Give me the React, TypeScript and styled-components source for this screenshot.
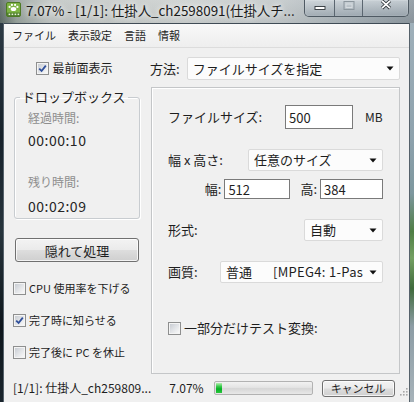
import React from "react";
import styled, { createGlobalStyle } from "styled-components";

const UI_FONT = `"Noto Sans CJK JP", "Noto Sans", "DejaVu Sans", sans-serif`;

const GlobalStyle = createGlobalStyle`
  * { box-sizing: border-box; }
  html, body { margin: 0; padding: 0; }
  body {
    width: 414px;
    height: 402px;
    overflow: hidden;
    background: #1b252d;
    font-family: ${UI_FONT};
  }
`;

const Window = styled.div`
  width: 414px;
  height: 402px;
  display: flex;
  flex-direction: column;
  overflow: hidden;
  font-family: ${UI_FONT};
  color: #1e1e1e;
`;

/* ---- aero title bar ---- */

const TitleBar = styled.div`
  flex: none;
  height: 23px;
  display: flex;
  align-items: flex-start;
  background:
    linear-gradient(180deg, rgba(255, 255, 255, 0.1), rgba(0, 0, 0, 0.04)),
    linear-gradient(90deg, #5f6d68 0%, #98a39d 4%, #c1c6c4 12%, #cdd1d0 45%, #c2c8ca 68%, #a6b0b6 86%, #8e99a1 100%);
`;

const AppIcon = styled.svg`
  flex: none;
  width: 15px;
  height: 15px;
  margin: 2px 0 0 6px;
`;

const TitleText = styled.div`
  flex: none;
  margin: 1px 0 0 5px;
  font-size: 13.4px;
  line-height: 19px;
  white-space: nowrap;
  color: #1a1a1a;
  text-shadow: 0 0 5px rgba(255, 255, 255, 0.95), 0 0 9px rgba(255, 255, 255, 0.7);
`;

const CaptionGroup = styled.div`
  flex: none;
  display: flex;
  margin-left: auto;
  margin-right: 5px;
  height: 17px;
  border: 1px solid #4f5a63;
  border-top: none;
  border-radius: 0 0 5px 5px;
  overflow: hidden;
  box-shadow: inset 0 0 0 1px rgba(255, 255, 255, 0.3);
`;

const CaptionButton = styled.div<{ $w: number }>`
  width: ${(p) => p.$w}px;
  display: flex;
  align-items: flex-start;
  justify-content: center;
  background: linear-gradient(180deg, rgba(214, 221, 226, 0.7) 0%, rgba(184, 193, 200, 0.7) 50%, rgba(156, 167, 176, 0.75) 100%);

  & + & {
    border-left: 1px solid #5b6670;
  }
`;

const Glyph = styled.svg<{ $top: number }>`
  width: 12px;
  height: 10px;
  margin-top: ${(p) => p.$top}px;
`;

/* ---- frame ---- */

const FrameBody = styled.div`
  flex: 1;
  min-height: 0;
  display: flex;
`;

const SideFrame = styled.div<{ $side: "left" | "right" }>`
  flex: none;
  width: ${(p) => (p.$side === "left" ? 4 : 5)}px;
  background: ${(p) =>
    p.$side === "left"
      ? "linear-gradient(180deg, #2c3a44 0%, #17222b 30%, #27343c 55%, #0e161c 80%, #1a252d 100%)"
      : "linear-gradient(180deg, #9fb0ba 0%, #8ea2ad 30%, #7d979e 45%, #4f7e45 55%, #74a062 62%, #3f6a3c 70%, #8d9da5 80%, #a7b3ba 100%)"};
  ${(p) => (p.$side === "left" ? "border-right: 1px solid #56626b;" : "border-left: 1px solid #56626b;")}
`;

const Client = styled.div`
  flex: none;
  width: 405px;
  display: flex;
  flex-direction: column;
  background: #f0f0f0;
  border-top: 1px solid #3f4b55;
`;

const MenuBar = styled.div`
  flex: none;
  height: 24px;
  display: flex;
  align-items: center;
  padding-left: 2px;
  background: linear-gradient(180deg, #f8f8f8, #eeeeee);
  border-bottom: 1px solid #dcdcdc;
`;

const MenuItem = styled.span`
  padding: 0 6px 1px;
  font-size: 11px;
  line-height: 16px;
`;

const Main = styled.div`
  flex: 1;
  min-height: 0;
  display: flex;
`;

/* ---- left pane ---- */

const LeftPane = styled.div`
  flex: none;
  width: 141px;
  display: flex;
  flex-direction: column;
  align-items: flex-start;
`;

const CheckRow = styled.label<{ $size: number; $mt: number; $ml?: number; $center?: boolean }>`
  display: flex;
  align-items: center;
  gap: 3px;
  height: 16px;
  margin-top: ${(p) => p.$mt}px;
  margin-left: ${(p) => p.$ml ?? 0}px;
  ${(p) => (p.$center ? "align-self: center;" : "")}
  font-size: ${(p) => p.$size}px;
  line-height: 16px;
  white-space: nowrap;
`;

const CheckFrame = styled.span`
  flex: none;
  width: 13px;
  height: 13px;
  padding: 1px;
  border: 1px solid #8e8f8f;
  background: #f4f4f4;
  display: flex;
`;

const CheckFill = styled.span`
  flex: 1;
  display: flex;
  align-items: center;
  justify-content: center;
  background: linear-gradient(135deg, #c9cdd3 0%, #e4e6e9 55%, #f8f8f8 100%);
`;

const Group = styled.fieldset`
  margin: 13px 0 0 10px;
  width: 126px;
  padding: 0;
  min-width: 0;
  border: 1px solid #c8ccd0;
  border-radius: 3px;
  box-shadow: inset 1px 1px 0 #fff, 1px 1px 0 #fff;
`;

const GroupTitle = styled.legend`
  margin-left: 5px;
  padding: 0 2px;
  font-size: 13px;
  line-height: 16px;
`;

const GroupBody = styled.div`
  padding: 5px 13px 4px;
`;

const GroupLabel = styled.div<{ $mt: number }>`
  margin-top: ${(p) => p.$mt}px;
  font-size: 12px;
  line-height: 16px;
  color: #8e8e8e;
`;

const Clock = styled.div<{ $mt: number }>`
  margin-top: ${(p) => p.$mt}px;
  font-size: 14px;
  line-height: 16px;
  letter-spacing: 0.5px;
  color: #262626;
`;

const PushButton = styled.button<{ $w: number; $h: number; $size: number; $mt?: number; $ml?: number }>`
  flex: none;
  width: ${(p) => p.$w}px;
  height: ${(p) => p.$h}px;
  margin-top: ${(p) => p.$mt ?? 0}px;
  margin-left: ${(p) => p.$ml ?? 0}px;
  padding: 0;
  font-family: ${UI_FONT};
  font-size: ${(p) => p.$size}px;
  line-height: 1;
  color: #1e1e1e;
  border: 1px solid #707070;
  border-radius: 3px;
  background: linear-gradient(180deg, #f3f3f3 0%, #ebebeb 48%, #dddddd 52%, #cfcfcf 100%);
  box-shadow: inset 0 0 0 1px rgba(255, 255, 255, 0.75);
`;

/* ---- right pane ---- */

const RightPane = styled.div`
  flex: 1;
  min-width: 0;
  display: flex;
  flex-direction: column;
  padding: 9px 9px 0 5px;
`;

const MethodRow = styled.div`
  display: flex;
  align-items: center;
  gap: 7px;
  height: 23px;
  font-size: 13px;
`;

const Panel = styled.div`
  margin: 7px 0 0 1px;
  height: 287px;
  padding: 17px 16px 0;
  border: 1px solid #c4c6c8;
  box-shadow: inset 1px 1px 0 #fff;
  display: flex;
  flex-direction: column;
`;

const PanelRow = styled.div<{ $mt: number; $h: number; $justify?: string }>`
  display: flex;
  align-items: center;
  justify-content: ${(p) => p.$justify ?? "flex-start"};
  height: ${(p) => p.$h}px;
  margin-top: ${(p) => p.$mt}px;
  font-size: 13px;
`;

const FieldLabel = styled.span<{ $w?: number; $ml?: number }>`
  flex: none;
  ${(p) => (p.$w ? `width: ${p.$w}px;` : "")}
  margin-left: ${(p) => p.$ml ?? 0}px;
  line-height: 16px;
  white-space: nowrap;
`;

const Field = styled.input<{ $w: number; $h: number; $ml?: number }>`
  flex: none;
  width: ${(p) => p.$w}px;
  height: ${(p) => p.$h}px;
  margin: 0 0 0 ${(p) => p.$ml ?? 0}px;
  padding: 0 3px;
  font-family: ${UI_FONT};
  font-size: 13px;
  color: #1e1e1e;
  background: #fff;
  border: 1px solid #7a7a7a;
  border-radius: 0;
  outline: none;
`;

const Combo = styled.div<{ $w?: number; $h: number }>`
  ${(p) => (p.$w ? `flex: none; width: ${p.$w}px;` : "flex: 1; min-width: 0;")}
  height: ${(p) => p.$h}px;
  display: flex;
  align-items: center;
  background: #fcfcfc;
  border: 1px solid #dadada;
  border-radius: 2px;
  font-size: 13px;
`;

const ComboValue = styled.div`
  flex: 1;
  min-width: 0;
  height: 100%;
  display: flex;
  align-items: center;
  overflow: hidden;
  white-space: nowrap;
  padding-left: 5px;
  line-height: 18px;
`;

const ComboPart = styled.span<{ $w?: number }>`
  flex: none;
  ${(p) => (p.$w ? `width: ${p.$w}px;` : "letter-spacing: 0.3px;")}
`;

const ComboArrow = styled.svg<{ $w?: number }>`
  flex: none;
  width: ${(p) => p.$w ?? 18}px;
  height: 5px;
`;

const Unit = styled.span`
  margin-left: 12px;
  font-size: 12px;
  line-height: 16px;
`;

/* ---- status bar ---- */

const StatusBar = styled.div`
  flex: none;
  height: 25px;
  display: flex;
  align-items: center;
  padding: 0 1px 3px 9px;
  font-size: 12px;
  white-space: nowrap;
`;

const StatusText = styled.span<{ $ml?: number }>`
  margin-left: ${(p) => p.$ml ?? 0}px;
  line-height: 16px;
`;

const Progress = styled.div`
  flex: none;
  width: 99px;
  height: 14px;
  margin-left: 10px;
  padding: 1px;
  border: 1px solid #b2b2b2;
  border-radius: 2px;
  background: linear-gradient(180deg, #f2f2f2 0%, #e4e4e4 45%, #d6d6d6 55%, #e8e8e8 100%);
  display: flex;
`;

const ProgressFill = styled.div`
  height: 100%;
  background: linear-gradient(180deg, #b5f0b2 0%, #37c94a 35%, #06b025 60%, #2bc63e 100%);
`;

const Grip = styled.svg`
  flex: none;
  width: 10px;
  height: 10px;
  margin-left: auto;
  align-self: flex-end;
  margin-bottom: 2px;
`;

function Check({ checked }: { checked?: boolean }) {
  return (
    <CheckFrame>
      <CheckFill>
        {checked && (
          <svg width="9" height="9" viewBox="0 0 9 9">
            <path d="M1.2 4.6 L3.6 7 L7.8 1.6" fill="none" stroke="#2f4f9a" strokeWidth="1.8" />
          </svg>
        )}
      </CheckFill>
    </CheckFrame>
  );
}

function Arrow({ w }: { w?: number }) {
  const width = w ?? 18;
  const right = width - 5.5;
  return (
    <ComboArrow $w={width} viewBox={`0 0 ${width} 5`}>
      <path d={`M${right - 7} 0.5 H${right} L${right - 3.5} 4.5 Z`} fill="#111" />
    </ComboArrow>
  );
}

export default function App() {
  const percent = 7.07;
  return (
    <>
      <GlobalStyle />
      <Window>
        <TitleBar>
          <AppIcon viewBox="0 0 15 15">
            <rect x="0.5" y="0.5" width="14" height="14" rx="1.5" fill="#7db443" stroke="#4d7a25" />
            <rect x="1" y="10.6" width="13" height="3.4" fill="#4f7f2a" />
            <ellipse cx="7.5" cy="7" rx="2.8" ry="2.1" fill="#fff" />
            <circle cx="3.6" cy="4.9" r="1.1" fill="#fff" />
            <circle cx="5.9" cy="2.9" r="1.1" fill="#fff" />
            <circle cx="9.1" cy="2.9" r="1.1" fill="#fff" />
            <circle cx="11.4" cy="4.9" r="1.1" fill="#fff" />
            {[2.6, 5.6, 8.6, 11.6].map((x) => (
              <rect key={x} x={x} y="11.6" width="1.6" height="1.5" fill="#eaf4dc" />
            ))}
          </AppIcon>
          <TitleText>7.07% - [1/1]: 仕掛人_ch2598091(仕掛人チ...</TitleText>
          <CaptionGroup>
            <CaptionButton $w={29}>
              <Glyph $top={5} viewBox="0 0 12 10">
                <rect x="1" y="1.5" width="10" height="3" fill="#fff" stroke="#2e3439" strokeWidth="0.9" />
              </Glyph>
            </CaptionButton>
            <CaptionButton $w={28}>
              <Glyph $top={1} viewBox="0 0 12 10">
                <rect x="1" y="0.5" width="10" height="8" fill="none" stroke="#8c969d" strokeWidth="1" />
                <rect x="3" y="3" width="6" height="3.5" fill="none" stroke="#d6dbdf" strokeWidth="1" />
              </Glyph>
            </CaptionButton>
            <CaptionButton $w={46}>
              <Glyph $top={0} viewBox="0 0 12 10">
                <path d="M2 0.8 L10 8.2 M10 0.8 L2 8.2" stroke="#2e3439" strokeWidth="3.4" />
                <path d="M2 0.8 L10 8.2 M10 0.8 L2 8.2" stroke="#fff" strokeWidth="1.8" />
              </Glyph>
            </CaptionButton>
          </CaptionGroup>
        </TitleBar>

        <FrameBody>
          <SideFrame $side="left" />
          <Client>
            <MenuBar>
              <MenuItem>ファイル</MenuItem>
              <MenuItem>表示設定</MenuItem>
              <MenuItem>言語</MenuItem>
              <MenuItem>情報</MenuItem>
            </MenuBar>

            <Main>
              <LeftPane>
                <CheckRow $size={12} $mt={12} $center>
                  <Check checked />
                  最前面表示
                </CheckRow>

                <Group>
                  <GroupTitle>ドロップボックス</GroupTitle>
                  <GroupBody>
                    <GroupLabel $mt={0}>経過時間:</GroupLabel>
                    <Clock $mt={6}>00:00:10</Clock>
                    <GroupLabel $mt={26}>残り時間:</GroupLabel>
                    <Clock $mt={8}>00:02:09</Clock>
                  </GroupBody>
                </Group>

                <PushButton $w={124} $h={24} $size={13} $mt={19} $ml={11}>
                  隠れて処理
                </PushButton>

                <CheckRow $size={11} $mt={18} $ml={9}>
                  <Check />
                  CPU 使用率を下げる
                </CheckRow>
                <CheckRow $size={11} $mt={16} $ml={9}>
                  <Check checked />
                  完了時に知らせる
                </CheckRow>
                <CheckRow $size={11} $mt={16} $ml={9}>
                  <Check />
                  完了後に PC を休止
                </CheckRow>
              </LeftPane>

              <RightPane>
                <MethodRow>
                  <FieldLabel>方法:</FieldLabel>
                  <Combo $h={23}>
                    <ComboValue>ファイルサイズを指定</ComboValue>
                    <Arrow />
                  </Combo>
                </MethodRow>

                <Panel>
                  <PanelRow $mt={0} $h={24}>
                    <FieldLabel $w={117}>ファイルサイズ:</FieldLabel>
                    <Field $w={68} $h={24} defaultValue="500" readOnly />
                    <Unit>MB</Unit>
                  </PanelRow>

                  <PanelRow $mt={20} $h={22} $justify="space-between">
                    <FieldLabel>幅 x 高さ:</FieldLabel>
                    <Combo $w={135} $h={22}>
                      <ComboValue>任意のサイズ</ComboValue>
                      <Arrow />
                    </Combo>
                  </PanelRow>

                  <PanelRow $mt={8} $h={20} $justify="flex-end">
                    <FieldLabel>幅:</FieldLabel>
                    <Field $w={66} $h={20} $ml={3} defaultValue="512" readOnly />
                    <FieldLabel $ml={10}>高:</FieldLabel>
                    <Field $w={63} $h={20} $ml={3} defaultValue="384" readOnly />
                  </PanelRow>

                  <PanelRow $mt={20} $h={22} $justify="space-between">
                    <FieldLabel>形式:</FieldLabel>
                    <Combo $w={79} $h={22}>
                      <ComboValue>自動</ComboValue>
                      <Arrow />
                    </Combo>
                  </PanelRow>

                  <PanelRow $mt={20} $h={22} $justify="space-between">
                    <FieldLabel>画質:</FieldLabel>
                    <Combo $w={163} $h={22}>
                      <ComboValue>
                        <ComboPart $w={47}>普通</ComboPart>
                        <ComboPart>[MPEG4: 1-Pass, 768kbps]</ComboPart>
                      </ComboValue>
                      <Arrow w={19} />
                    </Combo>
                  </PanelRow>

                  <CheckRow $size={13} $mt={37}>
                    <Check />
                    一部分だけテスト変換:
                  </CheckRow>
                </Panel>
              </RightPane>
            </Main>

            <StatusBar>
              <StatusText>[1/1]: 仕掛人_ch259809...</StatusText>
              <StatusText $ml={18}>7.07%</StatusText>
              <Progress>
                <ProgressFill style={{ width: `${percent}%` }} />
              </Progress>
              <PushButton $w={73} $h={17} $size={11} $ml={9}>
                キャンセル
              </PushButton>
              <Grip viewBox="0 0 10 10">
                {[
                  [8, 0], [8, 3], [5, 3], [8, 6], [5, 6], [2, 6],
                ].map(([x, y]) => (
                  <rect key={`${x}-${y}`} x={x} y={y + 1} width="1.6" height="1.6" fill="#a8a8a8" />
                ))}
              </Grip>
            </StatusBar>
          </Client>
          <SideFrame $side="right" />
        </FrameBody>
      </Window>
    </>
  );
}
